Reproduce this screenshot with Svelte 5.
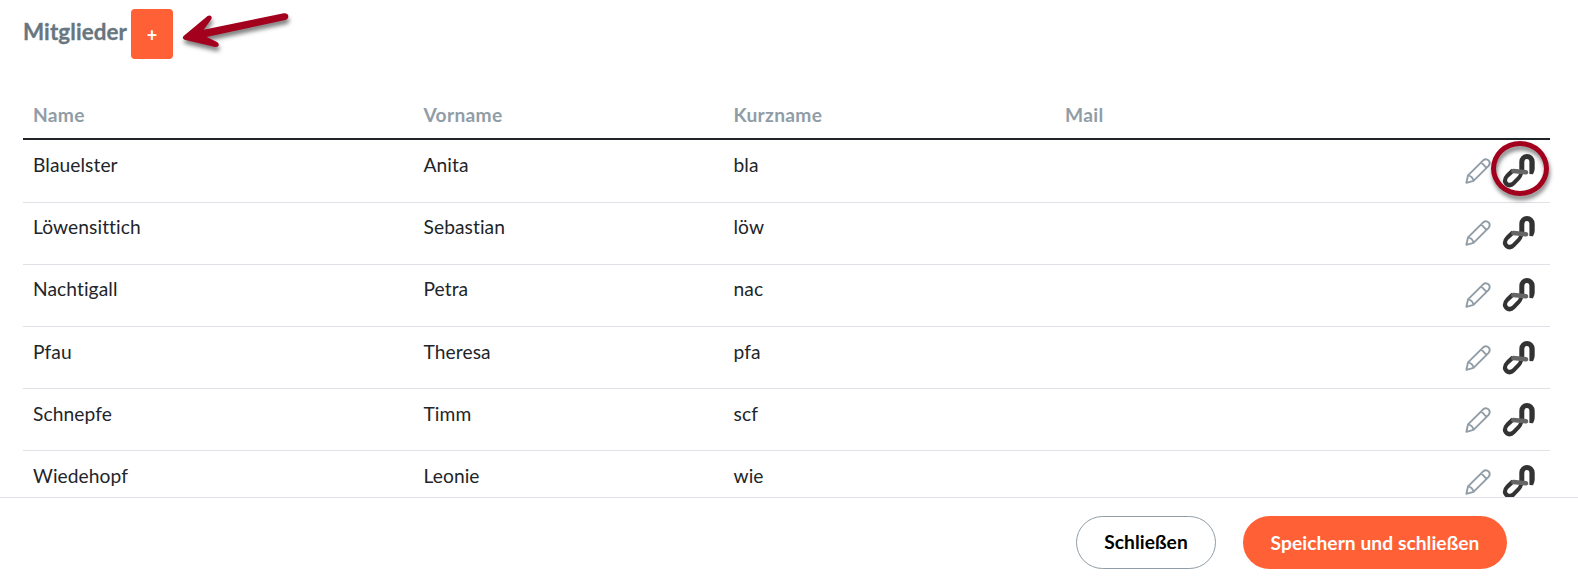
<script>
    let members = [
        { name: "Blauelster", firstName: "Anita", short: "bla", mail: "" },
        { name: "Löwensittich", firstName: "Sebastian", short: "löw", mail: "" },
        { name: "Nachtigall", firstName: "Petra", short: "nac", mail: "" },
        { name: "Pfau", firstName: "Theresa", short: "pfa", mail: "" },
        { name: "Schnepfe", firstName: "Timm", short: "scf", mail: "" },
        { name: "Wiedehopf", firstName: "Leonie", short: "wie", mail: "" },
    ];
</script>

<div class="dialog">
    <div class="content">
        <div class="heading">
            <h2>Mitglieder</h2>
            <button class="add">+</button>
            <svg class="arrow" width="110" height="50" viewBox="0 0 110 50">
                <path
                    d="M2.6 27.9 L26.6 8.1 Q29 6.7 30.4 8.6 Q31.2 10.1 29.8 12.1 L22.6 21.7 L102.8 5.2 Q106.6 4.8 107.3 7.8 Q107.5 11.1 104.2 12.1 L25.6 29.1 L36 33.9 Q38.4 35.3 37.6 37.4 Q36.6 39.4 34 38.9 L3.6 31.7 Q.6 30.4 2.6 27.9Z"
                />
            </svg>
        </div>

        <table>
            <colgroup>
                <col class="c-name" />
                <col class="c-first" />
                <col class="c-short" />
                <col />
                <col class="c-actions" />
            </colgroup>
            <thead>
                <tr>
                    <th>Name</th>
                    <th>Vorname</th>
                    <th>Kurzname</th>
                    <th>Mail</th>
                    <th></th>
                </tr>
            </thead>
            <tbody>
                {#each members as member, index}
                    <tr>
                        <td>{member.name}</td>
                        <td>{member.firstName}</td>
                        <td>{member.short}</td>
                        <td>{member.mail}</td>
                        <td>
                            <div class="actions">
                                <svg class="pencil" width="26" height="26" viewBox="0 0 26 26">
                                    <path d="M1.4 24.8 L3 17.4 L18.2 2.3 Q21 0 23.6 2.4 Q25.8 5 23.6 7.8 L8.5 22.8Z M16.2 4.4 L21.5 9.8 M3 17.4 Q7.5 18 8.5 22.8" />
                                </svg>
                                <span class="link">
                                    <svg width="34" height="35" viewBox="0 0 34 35">
                                        <path class="dark" d="M17.3 17V7.7A7.7 7.7 0 0 1 32.7 7.7V14.5Q32.7 17.5 31 20.2L27.4 20V8a2.55 2.9 0 0 0-5.1 0V18Z" />
                                        <path class="dark" d="M9.5 14.8L4.3 19.8Q-.3 24.5 1.2 28.8Q2.8 33 7.5 33.4Q10.5 33.4 13 30.8L18.2 25.3Q20.2 23 21.2 19.6L17 19.4Q16.8 21 15.6 22.2L10.2 27.7Q7.8 29.7 5.8 27.9Q4.2 26 6.2 23.8L12.2 18.2Z" />
                                        <path class="bar" d="M11.4 17L24 18.3" />
                                    </svg>
                                    {#if index === 0}
                                        <span class="ring"></span>
                                    {/if}
                                </span>
                            </div>
                        </td>
                    </tr>
                {/each}
            </tbody>
        </table>
    </div>

    <div class="footer">
        <button class="close">Schließen</button>
        <button class="save">Speichern und schließen</button>
    </div>
</div>

<style>
    :global(body) {
        background: #fff;
    }
    .dialog {
        width: 1578px;
        height: 582px;
        display: flex;
        flex-direction: column;
        overflow: hidden;
        font-family: Lato, sans-serif;
        font-size: 19.2px;
        font-variant-ligatures: none;
        letter-spacing: 0.08px;
        color: #212529;
    }
    .content {
        height: 497px;
        box-sizing: border-box;
        padding: 9px 28px 0 23px;
        overflow: hidden;
    }
    .heading {
        display: flex;
        height: 50px;
        margin-bottom: 32px;
    }
    h2 {
        margin: 0;
        width: 108px;
        font-size: 22.4px;
        line-height: 46px;
        font-weight: 700;
        letter-spacing: 0.1px;
        -webkit-text-stroke: 0.3px #687680;
        color: #687680;
    }
    button {
        box-sizing: border-box;
        border: none;
        padding: 0;
        font-family: inherit;
        font-size: 19.2px;
        letter-spacing: 0.06px;
        cursor: pointer;
    }
    .add {
        width: 42px;
        height: 50px;
        padding-top: 2px;
        border-radius: 4px;
        background: #ff6035;
        color: #fff;
        font-weight: 700;
        font-size: 18px;
    }
    .arrow {
        margin: -1px 0 0 8px;
        overflow: visible;
        fill: #a3001e;
        filter: drop-shadow(1px 4px 2px rgba(0, 0, 0, 0.5));
    }
    table {
        width: 1527px;
        table-layout: fixed;
        border-collapse: separate;
        border-spacing: 0;
    }
    .c-name {
        width: 390px;
    }
    .c-first {
        width: 310px;
    }
    .c-short {
        width: 332px;
    }
    .c-actions {
        width: 110px;
    }
    th {
        height: 49px;
        box-sizing: border-box;
        padding: 0 10px;
        border-bottom: 2px solid #212529;
        text-align: left;
        line-height: 28px;
        font-weight: 700;
        letter-spacing: 0.3px;
        color: #919da6;
    }
    td {
        box-sizing: border-box;
        height: 62px;
        padding: 9px 10px 0;
        border-top: 1px solid #dee2e6;
        vertical-align: top;
        line-height: 29px;
    }
    th:nth-child(2),
    th:nth-child(3),
    td:nth-child(2),
    td:nth-child(3) {
        padding-left: 10.5px;
    }
    tbody tr:first-child td {
        border-top-color: transparent;
    }
    tbody tr:nth-child(n + 4) td {
        padding-top: 10px;
    }
    td:last-child {
        padding-right: 14px;
    }
    .actions {
        display: flex;
        justify-content: flex-end;
        align-items: center;
        gap: 11px;
        height: 35px;
        margin-top: 4px;
    }
    .pencil {
        margin-bottom: 2px;
        fill: none;
        stroke: #919da6;
        stroke-width: 1.9;
        stroke-linejoin: round;
    }
    .link {
        position: relative;
        display: flex;
    }
    .dark {
        fill: #333;
    }
    .bar {
        stroke: #666;
        stroke-linecap: round;
        stroke-width: 4.6;
    }
    .ring {
        position: absolute;
        left: -11px;
        top: -13px;
        width: 58px;
        height: 55px;
        box-sizing: border-box;
        border: 5px solid #a3001e;
        border-radius: 50%;
        filter: drop-shadow(1px 4px 2px rgba(0, 0, 0, 0.5));
    }
    .footer {
        flex: 1;
        display: flex;
        justify-content: flex-end;
        align-items: flex-start;
        gap: 27px;
        padding: 18px 71px 0 0;
        border-top: 1px solid #dee2e6;
    }
    .close,
    .save {
        height: 53px;
        border-radius: 27px;
        font-weight: 700;
    }
    .close {
        width: 140px;
        padding-bottom: 2px;
        border: 1px solid #919da6;
        background: #fff;
        color: #000;
    }
    .save {
        width: 264px;
        background: #ff6035;
        color: #fff;
    }
</style>
